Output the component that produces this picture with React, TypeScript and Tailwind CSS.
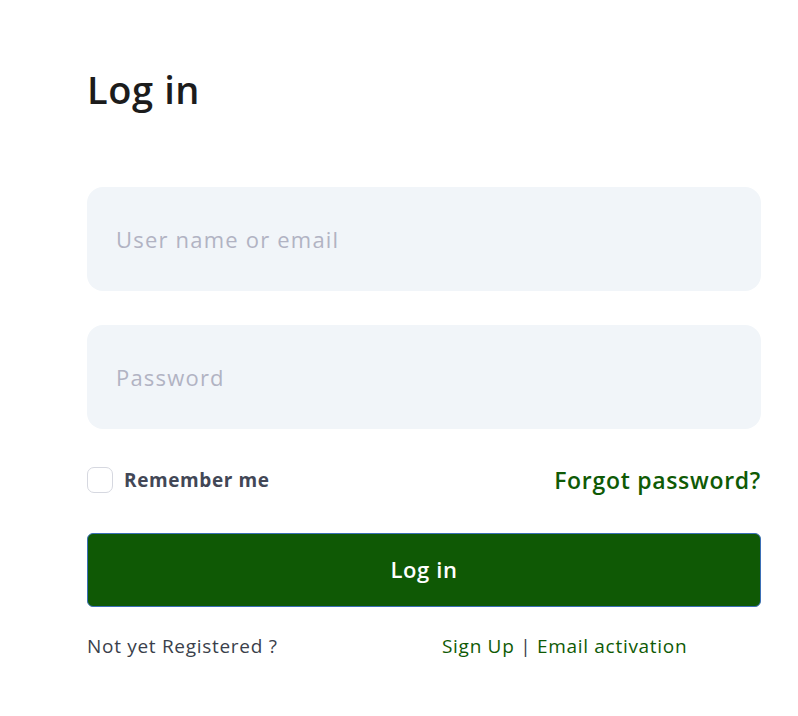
export default function App() {
  return (
    <div className="min-h-screen bg-white">
      <div className="ml-[87px] w-[674px] pt-[63px] font-['Open_Sans',sans-serif]">
        <h1 className="text-[38px] leading-[52px] font-semibold tracking-[0.6px] text-[#1c1c1c]">Log in</h1>
        <div className="mt-[72px] flex flex-col gap-[34px]">
          <input
            className="h-[104px] w-full rounded-[16px] bg-[#f1f5f9] px-[29px] text-[22px] tracking-[1.2px] text-[#1c1c1c] placeholder:text-[#b1b3c3] outline-none"
            placeholder="User name or email"
          />
          <input
            type="password"
            className="h-[104px] w-full rounded-[16px] bg-[#f1f5f9] px-[29px] text-[22px] tracking-[1.2px] text-[#1c1c1c] placeholder:text-[#b1b3c3] outline-none"
            placeholder="Password"
          />
        </div>
        <div className="mt-[34px] flex items-center justify-between">
          <label className="flex items-center gap-[11px]">
            <span className="block h-[26px] w-[26px] rounded-[7px] border border-[#d6d8e0] bg-white"></span>
            <span className="text-[19px] font-bold tracking-[0.6px] text-[#424756]">Remember me</span>
          </label>
          <a className="text-[23px] font-semibold tracking-[0.7px] text-[#0f5a05]">Forgot password?</a>
        </div>
        <button className="mt-[35px] flex h-[74px] w-full items-center justify-center rounded-[6px] border border-[#3b6fb6] bg-[#0f5905] text-[22px] font-semibold tracking-[0.6px] text-white">
          Log in
        </button>
        <div className="mt-[25px] grid grid-cols-2 text-[19px] leading-[28px] tracking-[0.7px]">
          <span className="text-[#3a3f4b]">Not yet Registered ?</span>
          <span className="pl-[18px] text-[#0f5a05]">
            Sign Up <span className="text-[#3a3f4b]">|</span> Email activation
          </span>
        </div>
      </div>
    </div>
  );
}
